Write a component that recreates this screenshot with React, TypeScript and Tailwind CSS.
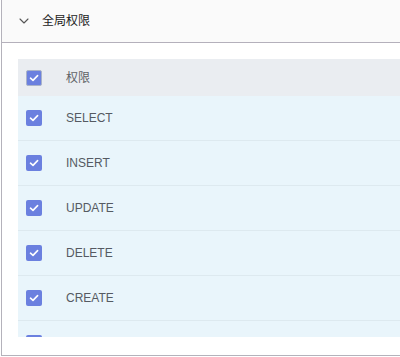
import React from 'react';
import { ChevronDown } from 'lucide-react';

const perms = ['SELECT', 'INSERT', 'UPDATE', 'DELETE', 'CREATE', ''];

const Check: React.FC<{ head?: boolean }> = ({ head }) => (
  <span
    className={`flex h-[16px] w-[16px] items-center justify-center rounded-[2px] bg-[#6b80df] ${
      head ? 'border border-[#aab3c9]' : ''
    }`}
  >
    <svg width="10" height="8" viewBox="0 0 10 8" fill="none">
      <path d="M1.5 4.2 L4 6.4 L8.6 1.6" stroke="white" strokeWidth="1.6" strokeLinecap="round" strokeLinejoin="round" />
    </svg>
  </span>
);

export default function App() {
  return (
    <div
      className="ml-[1px] h-[356px] border-l border-b border-[#b4b2bb] bg-white"
      style={{ fontFamily: '"Liberation Sans", Arial, "Noto Sans CJK SC", sans-serif' }}
    >
      {/* Panel header */}
      <div className="flex h-[43px] items-center border-b border-[#b4b0bb] bg-[#fafafa] pl-[14px]">
        <ChevronDown className="h-[16px] w-[16px] text-[#555]" strokeWidth={1.6} />
        <span className="ml-[10px] text-[12px] text-[#222]">全局权限</span>
      </div>

      {/* Table */}
      <div className="pl-[16px] pt-[16px] pb-[18px]">
        <div className="h-[278px] overflow-hidden">
          <div className="flex h-[37px] items-center bg-[#eaedf1] pl-[8px]">
            <Check head />
            <span className="ml-[24px] text-[12px] text-[#606266]">权限</span>
          </div>
          {perms.map((p, i) => (
            <div
              key={i}
              className="flex h-[45px] items-center border-b border-[#dde9ef] bg-[#e9f5fb] pl-[8px]"
            >
              <Check />
              {p && <span className="ml-[24px] text-[12px] text-[#555a62]">{p}</span>}
            </div>
          ))}
        </div>
      </div>
    </div>
  );
}
